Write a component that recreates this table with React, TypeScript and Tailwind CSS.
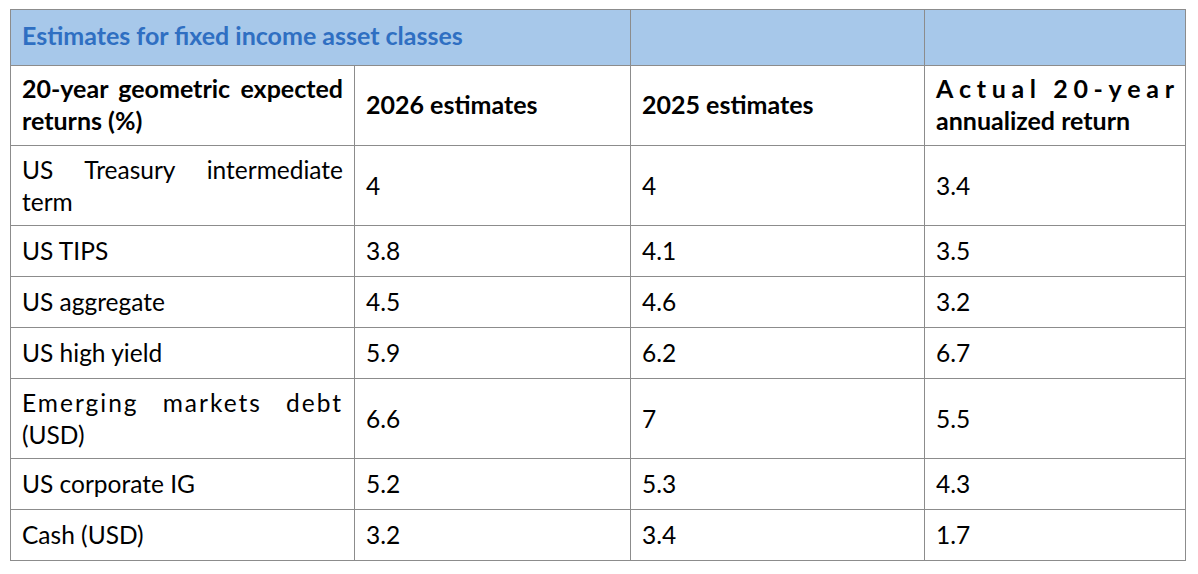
import React from "react";

const font = { fontFamily: "Lato, 'Liberation Sans', sans-serif" };

function Spread({ text }: { text: string }) {
  return (
    <div className="flex justify-between">
      {Array.from(text).map((c, i) => (
        <span key={i}>{c === " " ? "\u00a0" : c}</span>
      ))}
    </div>
  );
}

const rows: { label: React.ReactNode; h: string; v: [string, string, string] }[] = [
  {
    label: (
      <>
        <div className="[text-align-last:justify]">US Treasury intermediate</div>
        <div>term</div>
      </>
    ),
    h: "h-[80px]",
    v: ["4", "4", "3.4"],
  },
  { label: "US TIPS", h: "h-[51px]", v: ["3.8", "4.1", "3.5"] },
  { label: "US aggregate", h: "h-[51px]", v: ["4.5", "4.6", "3.2"] },
  { label: "US high yield", h: "h-[51px]", v: ["5.9", "6.2", "6.7"] },
  {
    label: (
      <>
        <div className="tracking-[2px] [text-align-last:justify]">Emerging markets debt</div>
        <div>(USD)</div>
      </>
    ),
    h: "h-[80px]",
    v: ["6.6", "7", "5.5"],
  },
  { label: "US corporate IG", h: "h-[51px]", v: ["5.2", "5.3", "4.3"] },
  { label: "Cash (USD)", h: "h-[51px]", v: ["3.2", "3.4", "1.7"] },
];

export default function App() {
  const cell = "border border-[#8c8c8c] px-[11px] py-0 align-middle";
  const bold = "font-bold text-[25px]";
  return (
    <div className="min-h-screen bg-white pl-[10px] pt-[9px] text-black" style={font}>
      <table className="table-fixed border-collapse w-[1176px] text-[24.5px] leading-[32px]">
        <colgroup>
          <col className="w-[344px]" />
          <col className="w-[276px]" />
          <col className="w-[294px]" />
          <col className="w-[261px]" />
        </colgroup>
        <tbody>
          <tr className="bg-[#a7c8ea]">
            <td colSpan={2} className={`${cell} ${bold} h-[56px] pb-[5px] text-[#2f6fc2]`}>
              Estimates for fixed income asset classes
            </td>
            <td className={cell}></td>
            <td className={cell}></td>
          </tr>
          <tr>
            <td className={`${cell} ${bold} h-[80px] pb-[3px]`}>
              <div className="[text-align-last:justify]">20-year geometric expected</div>
              <div>returns (%)</div>
            </td>
            <td className={`${cell} ${bold} pb-[3px]`}>2026 estimates</td>
            <td className={`${cell} ${bold} pb-[3px]`}>2025 estimates</td>
            <td className={`${cell} ${bold} pb-[3px]`}>
              <Spread text="Actual 20-year" />
              <div>annualized return</div>
            </td>
          </tr>
          {rows.map((r, i) => (
            <tr key={i}>
              <td className={`${cell} ${r.h}`}>{r.label}</td>
              <td className={cell}>{r.v[0]}</td>
              <td className={cell}>{r.v[1]}</td>
              <td className={cell}>{r.v[2]}</td>
            </tr>
          ))}
        </tbody>
      </table>
    </div>
  );
}
